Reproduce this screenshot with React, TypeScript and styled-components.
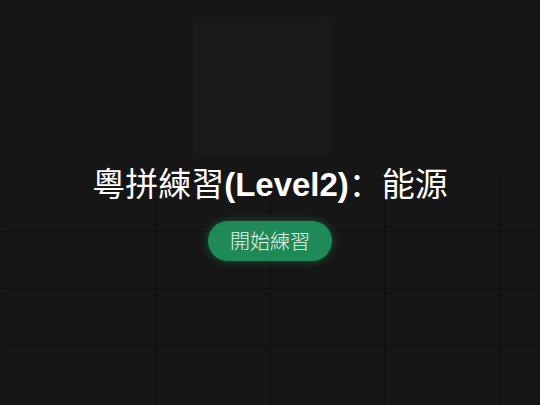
import React from 'react';
import styled, { createGlobalStyle } from 'styled-components';

const GlobalStyle = createGlobalStyle`
  html, body {
    margin: 0;
    padding: 0;
    background: #161616;
  }
  #root {
    min-height: 100vh;
  }
`;

const line = '#0f0f0f';

const Page = styled.div`
  width: 540px;
  height: 405px;
  overflow: hidden;
  display: flex;
  flex-direction: column;
  align-items: center;
  padding-top: 17px;
  box-sizing: border-box;
  background-color: #161616;
  background-image:
    linear-gradient(
      to bottom,
      transparent 57px,
      ${line} 57px 58px,
      transparent 58px 114px,
      ${line} 114px 115px,
      transparent 115px 171px,
      ${line} 171px 172px,
      transparent 172px
    ),
    linear-gradient(
      to right,
      transparent 155px,
      ${line} 155px 156px,
      transparent 156px 270px,
      ${line} 270px 271px,
      transparent 271px 384px,
      ${line} 384px 385px,
      transparent 385px 499px,
      ${line} 499px 500px,
      transparent 500px
    );
  background-repeat: no-repeat;
  background-position: 3px 174px, 0 174px;
  background-size: calc(100% - 3px) calc(100% - 174px), 100% calc(100% - 174px);
  font-family: "Liberation Sans", "Noto Sans CJK SC", sans-serif;
`;

const Cover = styled.div`
  width: 138px;
  height: 138px;
  margin-right: 16px;
  border-radius: 6px;
  background: #191919;
  box-shadow: inset 0 0 0 1px rgba(255, 255, 255, 0.01);
`;

const Title = styled.h1`
  margin: 8px 0 0;
  font-size: 33px;
  line-height: 38px;
  font-weight: 700;
  color: #ffffff;
  white-space: nowrap;
`;

const Cjk = styled.span`
  font-family: "Noto Sans CJK SC", sans-serif;
  font-weight: 400;
`;

const StartButton = styled.button`
  margin-top: 17px;
  height: 40px;
  padding: 0 22px;
  border: none;
  border-radius: 20px;
  background: #1e8a57;
  color: #e6f4ec;
  font-family: "Noto Sans CJK TC", sans-serif;
  font-size: 20px;
  font-weight: 300;
  line-height: 40px;
  box-shadow: 0 0 8px rgba(40, 170, 100, 0.45);
  cursor: pointer;
`;

export default function App() {
  return (
    <>
      <GlobalStyle />
      <Page>
        <Cover />
        <Title>
          <Cjk>粵拼練習</Cjk>(Level2)<Cjk>：能源</Cjk>
        </Title>
        <StartButton>開始練習</StartButton>
      </Page>
    </>
  );
}
